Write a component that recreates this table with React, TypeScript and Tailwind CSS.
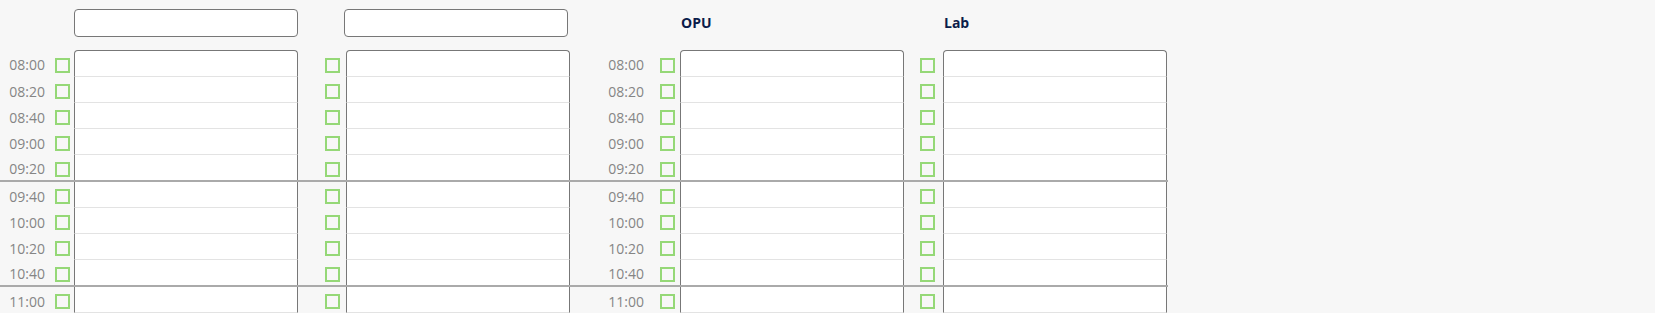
import React from "react";

const times = [
  "08:00",
  "08:20",
  "08:40",
  "09:00",
  "09:20",
  "09:40",
  "10:00",
  "10:20",
  "10:40",
  "11:00",
  "11:20",
  "11:40",
];

// rows after which a heavier divider runs across the whole sheet
const breaks = new Set([4, 8]);

const cols =
  "grid grid-cols-[74px_224px_48px_224px_110px_224px_39px_224px]";

function Check() {
  return (
    <span className="block w-[15px] h-[15px] border-2 border-[#95d877] shrink-0" />
  );
}

function Slot({ first, thick }: { first: boolean; thick: boolean }) {
  return (
    <div
      className={
        "bg-white border-x border-[#777] " +
        (first ? "border-t rounded-t-[4px] " : "") +
        (thick ? "" : "border-b border-b-[#e3e3e3]")
      }
    />
  );
}

function Time({ label }: { label: string }) {
  return (
    <span className="text-[14px] leading-none text-[#858585]">{label}</span>
  );
}

export default function App() {
  return (
    <div className="min-h-screen bg-[#f7f7f7] font-['Open_Sans',sans-serif]">
      <div className="w-[1168px]">
        <div className={cols + " pt-[9px] pb-[13px] items-center"}>
          <div />
          <input className="h-[28px] w-[224px] bg-white border border-[#777] rounded-[4px] outline-none" />
          <div />
          <input className="h-[28px] w-[224px] -ml-[2px] bg-white border border-[#777] rounded-[4px] outline-none" />
          <div />
          <div className="pl-[1px] -mt-[1px] text-[14px] font-bold text-[#0b1d4a]">OPU</div>
          <div />
          <div className="pl-[1px] -mt-[1px] text-[14px] font-bold text-[#0b1d4a]">Lab</div>
        </div>

        {times.map((t, i) => {
          const thick = breaks.has(i);
          const first = i === 0;
          return (
            <div
              key={t}
              className={
                cols +
                (thick
                  ? " h-[27px] border-b-2 border-[#aaa]"
                  : first
                  ? " h-[27px]"
                  : " h-[26px]")
              }
            >
              <div className="flex items-center justify-end pt-[3px] pr-[4px]">
                <Time label={t} />
                <span className="w-[10px]" />
                <Check />
              </div>
              <Slot first={first} thick={thick} />
              <div className="flex items-center justify-end pt-[3px] pr-[6px]">
                <Check />
              </div>
              <Slot first={first} thick={thick} />
              <div className="flex items-center justify-end pt-[3px] pr-[5px]">
                <Time label={t} />
                <span className="w-[16px]" />
                <Check />
              </div>
              <Slot first={first} thick={thick} />
              <div className="flex items-center justify-end pt-[3px] pr-[8px]">
                <Check />
              </div>
              <Slot first={first} thick={thick} />
            </div>
          );
        })}
      </div>
    </div>
  );
}
